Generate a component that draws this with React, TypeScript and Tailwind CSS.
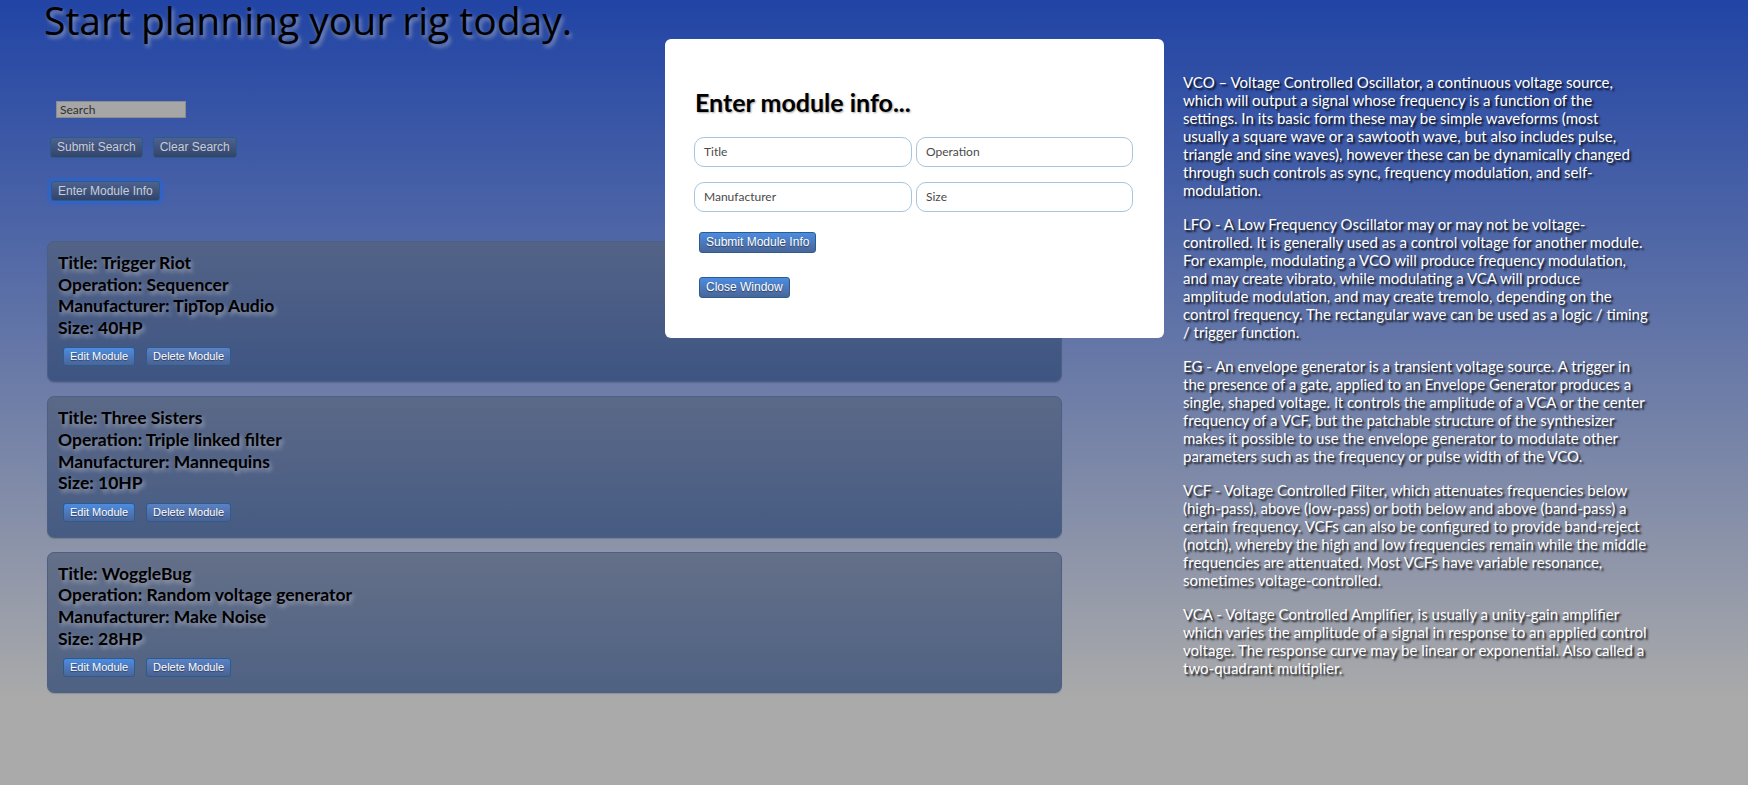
import React from "react";

type Mod = { title: string; op: string; mf: string; size: string };

const modules: Mod[] = [
  { title: "Trigger Riot", op: "Sequencer", mf: "TipTop Audio", size: "40HP" },
  { title: "Three Sisters", op: "Triple linked filter", mf: "Mannequins", size: "10HP" },
  { title: "WoggleBug", op: "Random voltage generator", mf: "Make Noise", size: "28HP" },
];

const paragraphs: string[][] = [
  [
    "VCO – Voltage Controlled Oscillator, a continuous voltage source,",
    "which will output a signal whose frequency is a function of the",
    "settings. In its basic form these may be simple waveforms (most",
    "usually a square wave or a sawtooth wave, but also includes pulse,",
    "triangle and sine waves), however these can be dynamically changed",
    "through such controls as sync, frequency modulation, and self-",
    "modulation.",
  ],
  [
    "LFO - A Low Frequency Oscillator may or may not be voltage-",
    "controlled. It is generally used as a control voltage for another module.",
    "For example, modulating a VCO will produce frequency modulation,",
    "and may create vibrato, while modulating a VCA will produce",
    "amplitude modulation, and may create tremolo, depending on the",
    "control frequency. The rectangular wave can be used as a logic / timing",
    "/ trigger function.",
  ],
  [
    "EG - An envelope generator is a transient voltage source. A trigger in",
    "the presence of a gate, applied to an Envelope Generator produces a",
    "single, shaped voltage. It controls the amplitude of a VCA or the center",
    "frequency of a VCF, but the patchable structure of the synthesizer",
    "makes it possible to use the envelope generator to modulate other",
    "parameters such as the frequency or pulse width of the VCO.",
  ],
  [
    "VCF - Voltage Controlled Filter, which attenuates frequencies below",
    "(high-pass), above (low-pass) or both below and above (band-pass) a",
    "certain frequency. VCFs can also be configured to provide band-reject",
    "(notch), whereby the high and low frequencies remain while the middle",
    "frequencies are attenuated. Most VCFs have variable resonance,",
    "sometimes voltage-controlled.",
  ],
  [
    "VCA - Voltage Controlled Amplifier, is usually a unity-gain amplifier",
    "which varies the amplitude of a signal in response to an applied control",
    "voltage. The response curve may be linear or exponential. Also called a",
    "two-quadrant multiplier.",
  ],
];

function DimButton({ children, glow }: { children: React.ReactNode; glow?: boolean }) {
  return (
    <button
      className={
        "rounded-[3px] border border-[#2a5c88] bg-[linear-gradient(180deg,#4d6290_0%,#33446a_100%)] px-[6px] font-['Liberation_Sans',Arial,sans-serif] text-[12px] text-[#c6cdd8] " +
        (glow
          ? "h-[20px] leading-[18px] shadow-[0_0_3px_3px_rgba(40,100,215,0.75)]"
          : "h-[21px] leading-[19px]")
      }
    >
      {children}
    </button>
  );
}

function BlueButton({ children, small, muted }: { children: React.ReactNode; small?: boolean; muted?: boolean }) {
  return (
    <button
      className={
        "rounded-[3px] border border-[#2b5c8e] px-[6px] font-['Liberation_Sans',Arial,sans-serif] text-white [text-shadow:0_1px_1px_rgba(0,0,0,0.45)] " +
        (small ? "h-[19px] text-[11px] leading-[17px] " : "h-[21px] text-[12px] leading-[19px] ") +
        (muted
          ? "bg-[linear-gradient(180deg,#5a82c4_0%,#4a6193_100%)]"
          : "bg-[linear-gradient(180deg,#4c8ce2_0%,#4b6597_100%)]")
      }
    >
      {children}
    </button>
  );
}

function Card({ m }: { m: Mod }) {
  return (
    <div className="w-[1015px] rounded-[7px] border border-[#4d5f82] bg-[linear-gradient(180deg,rgba(84,97,124,0.72)_0%,rgba(44,70,116,0.72)_100%)] pl-[10px] pt-[10px] pb-[15px] shadow-[0_1px_1px_rgba(0,0,0,0.15)]">
      <div className="text-[17.5px] font-bold leading-[21.6px] text-black [text-shadow:2px_3px_4px_rgba(165,170,185,0.9)]">
        <div>Title: {m.title}</div>
        <div>Operation: {m.op}</div>
        <div>Manufacturer: {m.mf}</div>
        <div>Size: {m.size}</div>
      </div>
      <div className="mt-[9px] ml-[5px] flex gap-[11px]">
        <BlueButton small>Edit Module</BlueButton>
        <BlueButton small muted>
          Delete Module
        </BlueButton>
      </div>
    </div>
  );
}

function Field({ label }: { label: string }) {
  return (
    <div className="flex h-[30px] items-center rounded-[10px] border border-[#a7c6db] bg-white pl-[9px] text-[12px] text-[#4a4a4a]">
      {label}
    </div>
  );
}

export default function App() {
  return (
    <div className="relative h-[785px] w-full overflow-hidden bg-[linear-gradient(180deg,#2144a5_0px,#aaaaaa_700px)] font-['Lato',sans-serif]">
      <div className="flex">
        <div className="w-[1062px] shrink-0 pl-[47px]">
          <h1 className="-ml-[3px] font-['Open_Sans',sans-serif] text-[39px] font-normal leading-[39px] text-black [text-shadow:2px_3px_4px_rgba(165,170,185,0.8)]">
            Start planning your rig today.
          </h1>
          <div className="mt-[62px] ml-[9px] flex h-[17px] w-[130px] items-center border border-[#8c8c8c] bg-[#a6a6a6] pl-[3px] text-[12px] text-[#2f2f2f]">
            Search
          </div>
          <div className="mt-[19px] ml-[3px] flex gap-[10px]">
            <DimButton>Submit Search</DimButton>
            <DimButton>Clear Search</DimButton>
          </div>
          <div className="mt-[23px] ml-[4px] flex">
            <DimButton glow>Enter Module Info</DimButton>
          </div>
          <div className="mt-[40px] flex flex-col gap-[14px]">
            {modules.map((m) => (
              <Card key={m.title} m={m} />
            ))}
          </div>
        </div>
        <div className="ml-[121px] w-[480px] shrink-0 pt-[73px] text-[15px] leading-[18px] text-white [text-shadow:2px_2px_2px_rgba(0,0,0,0.9)]">
          {paragraphs.map((p, i) => (
            <p key={i} className="mb-[16px]">
              {p.map((line, j) => (
                <span key={j} className="block whitespace-nowrap">
                  {line}
                </span>
              ))}
            </p>
          ))}
        </div>
      </div>

      <div className="absolute left-[665px] top-[39px] h-[299px] w-[499px] rounded-[6px] bg-white">
        <h2 className="ml-[30px] pt-[48px] text-[25px] font-bold leading-[30px] text-black [text-shadow:1px_1px_2px_rgba(0,0,0,0.35)]">
          Enter module info...
        </h2>
        <div className="ml-[29px] mt-[20px] grid grid-cols-[218px_217px] gap-x-[4px] gap-y-[15px]">
          <Field label="Title" />
          <Field label="Operation" />
          <Field label="Manufacturer" />
          <Field label="Size" />
        </div>
        <div className="ml-[34px] mt-[20px] flex">
          <BlueButton>Submit Module Info</BlueButton>
        </div>
        <div className="ml-[34px] mt-[24px] flex">
          <BlueButton>Close Window</BlueButton>
        </div>
      </div>
    </div>
  );
}
